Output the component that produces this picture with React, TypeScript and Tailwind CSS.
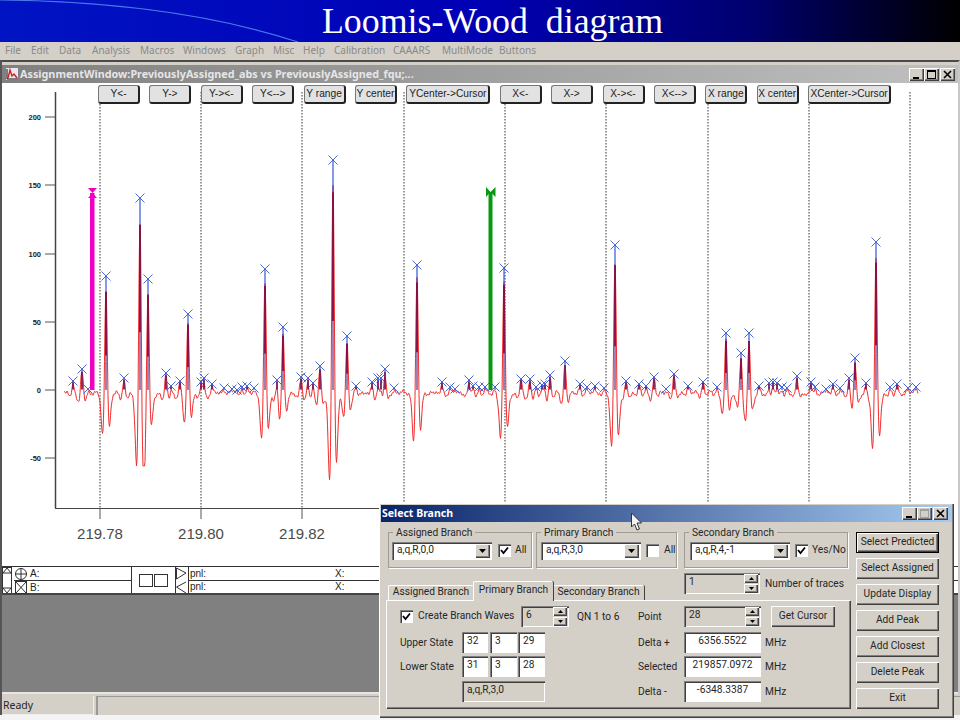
import React from "react";

const raised = "shadow-[inset_1px_1px_0_#ffffff,inset_-1px_-1px_0_#404040,inset_-2px_-2px_0_#808080]";
const sunken = "shadow-[inset_1px_1px_0_#808080,inset_2px_2px_0_#404040,inset_-1px_-1px_0_#ffffff]";

const peaks: [number, number][] = [
  [73,381],[82,369],[88,389],[106,276],[124,378],[140,198],[148,279],[166,373],[171,386],[180,381],[188,314],[201,382],[204,378],[212,384],[224,388],[232,389],[237,390],[242,387],[247,386],[254,388],[265,269],[277,380],[283,327],[301,377],[308,378],[313,383],[320,366],[333,160],[347,336],[356,386],[372,382],[378,378],[381,378],[385,369],[394,388],[417,265],[442,382],[450,387],[455,389],[469,380],[473,386],[479,387],[485,387],[495,387],[504,268],[521,379],[530,379],[536,387],[542,385],[545,384],[550,375],[565,361],[580,384],[587,387],[595,386],[604,388],[615,245],[626,381],[639,384],[646,386],[654,377],[666,389],[674,374],[688,386],[703,382],[717,387],[726,333],[741,353],[749,333],[759,386],[769,383],[773,382],[777,383],[782,387],[787,388],[797,376],[811,382],[815,387],[826,389],[833,384],[840,388],[849,378],[855,358],[866,383],[876,242],[890,387],[897,384],[908,388],[916,387],
];

const BASE = 390;

function tracePath(): string {
  let d = "";
  for (let x = 64; x <= 918; x += 0.5) {
    let v = 0;
    for (const [px, py] of peaks) {
      const h = BASE - py;
      const t = (x - px) / 2;
      const a = h * 0.92 + 1;
      const g = (1 - t * t) * Math.exp(-(t * t) / 2);
      v += a * (g > 0 ? g : g * (t < 0 ? 0.85 : 0.66));
      const u = (x - px) / 7;
      v -= h * 0.03 * Math.exp(-(u * u) / 2);
    }
    const noise = Math.sin(x * 0.9) * 1.2 + Math.sin(x * 2.3 + 1) * 1 + Math.sin(x * 0.37) * 0.9;
    let y = BASE + 2 - v + noise;
    if (x < 200) y = Math.min(y, 466);
    d += (d ? "L" : "M") + x.toFixed(1) + " " + y.toFixed(1);
  }
  return d;
}

function Chart() {
  const gridX = [100, 201, 302, 404, 505, 606, 708, 809, 910];
  const yTicks: [number, string][] = [[117, "200"], [185, "150"], [254, "100"], [322, "50"], [390, "0"], [458, "-50"]];
  const xLabels: [number, string][] = [[100, "219.78"], [201, "219.80"], [302, "219.82"]];
  const OY = 83;
  return (
    <svg width="956" height="483" viewBox={`2 ${OY} 956 483`} className="block bg-white">
      <line x1="55.500" y1="92" x2="55.500" y2="508" stroke="#444" strokeWidth="1.500" />
      <line x1="55" y1="508.500" x2="915" y2="508.500" stroke="#444" strokeWidth="1.200" />
      {yTicks.map(([y, l]) => (
        <g key={l}>
          <line x1="45" y1={y} x2="55" y2={y} stroke="#555" />
          <text x="41" y={y + 3} textAnchor="end" fontSize="7.500" fontWeight="bold" fontFamily="Liberation Sans" fill="#222">{l}</text>
        </g>
      ))}
      {gridX.map((x) => (
        <g key={x}>
          <line x1={x} y1="92" x2={x} y2="508" stroke="#333" strokeWidth="1" strokeDasharray="1.500 1.500" />
          <line x1={x} y1="508" x2={x} y2="519" stroke="#555" />
        </g>
      ))}
      {xLabels.map(([x, l]) => (
        <text key={l} x={x} y="539" textAnchor="middle" fontSize="15" fontFamily="Liberation Sans" fill="#4a4a4a">{l}</text>
      ))}
      <path d={tracePath()} fill="none" stroke="#f02c2c" strokeWidth="1" />
      {peaks.map(([x, y], i) => {
        const h = BASE - y;
        const big = h > 30;
        return (
          <g key={i}>
            <line x1={x} y1={BASE} x2={x} y2={y} stroke="#3558d6" strokeWidth="1.200" />
            {h > 3 && (
              <line x1={x} y1={BASE - h * 0.86} x2={x} y2={big ? BASE - h * 0.3 : BASE - 1} stroke="#8a0b3c" strokeWidth={big ? 1.800 : 1.500} />
            )}
            {big && <line x1={x} y1={BASE} x2={x} y2={BASE - h * 0.3} stroke="#a878a0" strokeWidth="1.400" />}
            <path d={`M${x - 4.5} ${y - 4.5}L${x + 4.5} ${y + 4.5}M${x + 4.5} ${y - 4.5}L${x - 4.5} ${y + 4.5}`} stroke="#3558d6" strokeWidth="0.900" fill="none" />
          </g>
        );
      })}
      <rect x="90" y="193" width="4.500" height="197" fill="#f000c0" />
      <path d="M88 188H97L92.500 193L97 198H88L92.500 193Z" fill="#f000c0" />
      <rect x="488.500" y="192" width="4" height="198" fill="#069a10" />
      <path d="M486 187L490.500 192L495.500 187V197L490.500 192L486 197Z" fill="#069a10" />
    </svg>
  );
}

function ChartBtn({ label, w = "w-[42px]" }: { label: string; w?: string }) {
  return (
    <div className={`${w} h-[19px] shrink-0 flex items-center justify-center rounded-[3px] bg-[#e2e2e2] border border-[#777] border-r-[#222] border-b-[#222] border-r-2 border-b-2 text-[10.200px] leading-none text-[#222] whitespace-nowrap overflow-hidden font-['Liberation_Sans',sans-serif]`}>
      {label}
    </div>
  );
}

function WinBtns({ disabledMax = false }: { disabledMax?: boolean }) {
  const cls = `w-[15px] h-[13px] bg-[#d4d0c8] flex items-center justify-center ${raised}`;
  return (
    <div className="flex">
      <div className={cls}><svg width="9" height="9"><rect x="1" y="7" width="6" height="2" fill="#000" /></svg></div>
      <div className={cls}><svg width="9" height="9"><rect x="0.500" y="1.500" width="8" height="7" fill="none" stroke={disabledMax ? "#a0a0a0" : "#000"} /><rect x="0" y="0" width="9" height="2" fill={disabledMax ? "#a0a0a0" : "#000"} /></svg></div>
      <div className={`${cls} ml-[1px]`}><svg width="9" height="9"><path d="M1 1L8 8M8 1L1 8" stroke="#000" strokeWidth="1.600" /></svg></div>
    </div>
  );
}

function GroupBox({ title, className, children }: { title: string; className: string; children: React.ReactNode }) {
  return (
    <div className={`relative h-[36px] border border-[#a09c94] shadow-[1px_1px_0_#ffffff] flex items-center pt-[1px] ${className}`}>
      <span className="absolute left-[4px] -top-[7px] bg-[#d4d0c8] px-[3px] leading-[13px]">{title}</span>
      {children}
    </div>
  );
}

function Combo({ value, w }: { value: string; w: string }) {
  return (
    <div className={`${w} h-[18px] bg-white ${sunken} flex items-center pl-[5px] pr-[2px] shrink-0`}>
      <span className="flex-1">{value}</span>
      <div className={`w-[15px] h-[14px] bg-[#d4d0c8] ${raised} flex items-center justify-center`}>
        <svg width="7" height="4"><path d="M0 0H7L3.500 4Z" fill="#000" /></svg>
      </div>
    </div>
  );
}

function Check({ on, className = "" }: { on: boolean; className?: string }) {
  return (
    <div className={`w-[13px] h-[13px] bg-white shrink-0 ${sunken} flex items-center justify-center ${className}`}>
      {on && <svg width="9" height="9"><path d="M1 4L3.500 7L8 1.500" stroke="#000" strokeWidth="1.800" fill="none" /></svg>}
    </div>
  );
}

function Spin({ value, w }: { value: string; w: string }) {
  const b = `w-[14px] h-[9px] bg-[#d4d0c8] ${raised} flex items-center justify-center`;
  return (
    <div className={`${w} h-[21px] ${sunken} bg-[#d4d0c8] flex items-center pl-[5px] pr-[2px] shrink-0`}>
      <span className="flex-1 -mt-[2px]">{value}</span>
      <div className="flex flex-col gap-[1px]">
        <div className={b}><svg width="5" height="3"><path d="M0 3H5L2.500 0Z" fill="#000" /></svg></div>
        <div className={b}><svg width="5" height="3"><path d="M0 0H5L2.500 3Z" fill="#000" /></svg></div>
      </div>
    </div>
  );
}

function Field({ value, w, center = false, gray = false }: { value: string; w: string; center?: boolean; gray?: boolean }) {
  return (
    <div className={`${w} h-[21px] ${sunken} ${gray ? "bg-[#d4d0c8]" : "bg-white"} flex items-center shrink-0 pb-[3px] ${center ? "justify-center" : "pl-[5px]"}`}>
      {value}
    </div>
  );
}

function DlgBtn({ label, def = false, w = "w-[83px]" }: { label: string; def?: boolean; w?: string }) {
  return (
    <div className={`${w} h-[21px] bg-[#d4d0c8] flex items-center justify-center whitespace-nowrap ${def ? "border border-black " : ""}${raised}`}>
      {label}
    </div>
  );
}

function Dialog() {
  return (
    <div className={`absolute left-[379px] top-[503px] w-[575px] h-[215px] bg-[#d4d0c8] ${raised} p-[2px] font-['Roboto',sans-serif] text-[10.200px] leading-none text-[#262626]`}>
      <div className="h-[17px] bg-[linear-gradient(90deg,#0a246a,#a6caf0)] flex items-center justify-between pl-[1px] pr-[4px]">
        <span className="text-white font-bold text-[10.500px] font-['Noto_Sans',sans-serif]">Select Branch</span>
        <WinBtns disabledMax />
      </div>
      <div className="flex pl-[5px] pt-[10px]">
        <div className="w-[464px] flex flex-col">
          <div className="flex ml-[2px]">
            <GroupBox title="Assigned Branch" className="w-[144px] pl-[3px]">
              <Combo value="a,q,R,0,0" w="w-[100px]" />
              <Check on className="ml-[6px]" />
              <span className="ml-[4px]">All</span>
            </GroupBox>
            <GroupBox title="Primary Branch" className="w-[141px] ml-[4px] pl-[4px]">
              <Combo value="a,q,R,3,0" w="w-[100px]" />
              <Check on={false} className="ml-[5px]" />
              <span className="ml-[5px]">All</span>
            </GroupBox>
            <GroupBox title="Secondary Branch" className="w-[164px] ml-[7px] pl-[5px]">
              <Combo value="a,q,R,4,-1" w="w-[100px]" />
              <Check on className="ml-[5px]" />
              <span className="ml-[4px]">Yes/No</span>
            </GroupBox>
          </div>
          <div className="flex h-[27px] mt-[5px] ml-[2px]">
            <div className="flex items-end w-[256px]">
              <div className="w-[85px] h-[15px] flex items-center justify-center border-t border-l border-white rounded-t-[2px] pb-[2px]">Assigned Branch</div>
              <div className="w-[80px] h-[20px] flex items-center justify-center border-t border-l border-white shadow-[1px_0_0_#404040] rounded-t-[2px] pb-[3px] relative z-10 bg-[#d4d0c8] -mb-[1px]">Primary Branch</div>
              <div className="w-[91px] h-[15px] flex items-center justify-center border-t border-white shadow-[1px_0_0_#404040] rounded-t-[2px] pb-[2px]">Secondary Branch</div>
            </div>
            <div className="ml-[40px] flex items-start">
              <Spin value="1" w="w-[76px]" />
              <span className="ml-[5px] mt-[6px] whitespace-nowrap">Number of traces</span>
            </div>
          </div>
          <div className="h-[108px] border-t border-l border-white shadow-[inset_-1px_-1px_0_#808080,1px_1px_0_#404040] pl-[13px] pt-[5px] flex flex-col">
            <div className="flex items-center h-[21px]">
              <div className="w-[238px] flex items-center">
                <Check on />
                <span className="ml-[5px] w-[103px] whitespace-nowrap">Create Branch Waves</span>
                <Spin value="6" w="w-[48px]" />
                <span className="ml-[8px] whitespace-nowrap pt-[1px]">QN 1 to 6</span>
              </div>
              <span className="w-[46px] pt-[1px]">Point</span>
              <Spin value="28" w="w-[77px]" />
              <div className="ml-[10px]"><DlgBtn label="Get Cursor" w="w-[64px]" /></div>
            </div>
            <div className="flex items-center h-[21px] mt-[5px]">
              <div className="w-[238px] flex items-center">
                <span className="w-[62px] pt-[2px]">Upper State</span>
                <Field value="32" w="w-[26px]" />
                <Field value="3" w="w-[27px] ml-[2px]" />
                <Field value="29" w="w-[27px] ml-[1px]" />
              </div>
              <span className="w-[46px] pt-[2px]">Delta +</span>
              <Field value="6356.5522" w="w-[77px]" center />
              <span className="ml-[4px] pt-[2px]">MHz</span>
            </div>
            <div className="flex items-center h-[21px] mt-[3px]">
              <div className="w-[238px] flex items-center">
                <span className="w-[62px] pt-[2px]">Lower State</span>
                <Field value="31" w="w-[26px]" />
                <Field value="3" w="w-[27px] ml-[2px]" />
                <Field value="28" w="w-[27px] ml-[1px]" />
              </div>
              <span className="w-[46px] pt-[2px]">Selected</span>
              <Field value="219857.0972" w="w-[77px]" center />
              <span className="ml-[4px] pt-[2px]">MHz</span>
            </div>
            <div className="flex items-center h-[21px] mt-[4px]">
              <div className="w-[238px] flex items-center">
                <span className="w-[62px]" />
                <Field value="a,q,R,3,0" w="w-[83px]" gray />
              </div>
              <span className="w-[46px] pt-[2px]">Delta -</span>
              <Field value="-6348.3387" w="w-[77px]" center />
              <span className="ml-[4px] pt-[2px]">MHz</span>
            </div>
          </div>
        </div>
        <div className="ml-[6px] flex flex-col gap-[5px]">
          <DlgBtn label="Select Predicted" def />
          {["Select Assigned", "Update Display", "Add Peak", "Add Closest", "Delete Peak", "Exit"].map((l) => (
            <DlgBtn key={l} label={l} />
          ))}
        </div>
      </div>
    </div>
  );
}

function Strip() {
  return (
    <div className="h-[29px] bg-white border-t border-[#333] border-b-2 border-b-[#444] flex text-[10px] leading-none text-[#222] font-['Liberation_Sans',sans-serif]">
      <svg width="12" height="26" className="shrink-0">
        <rect x="0.500" y="0.500" width="9" height="26" fill="#fff" stroke="#333" />
        <path d="M1 6L5 1L9 6Z" fill="none" stroke="#333" />
        <path d="M1 21L5 26L9 21Z" fill="none" stroke="#333" />
      </svg>
      <div className="w-[118px] flex flex-col border-r border-[#333] shrink-0">
        <div className="h-[14px] flex items-center border-b border-[#333]">
          <svg width="14" height="14"><circle cx="7" cy="7" r="5.500" fill="none" stroke="#333" /><path d="M1 7H13M7 1V13" stroke="#333" /></svg>
          <span className="ml-[2px]">A:</span>
        </div>
        <div className="flex-1 flex items-center">
          <svg width="14" height="13"><rect x="1.500" y="0.500" width="11" height="12" fill="none" stroke="#333" /><path d="M2 1L12 12M12 1L2 12" stroke="#333" /></svg>
          <span className="ml-[2px]">B:</span>
        </div>
      </div>
      <div className="w-[44px] flex items-center justify-center shrink-0 border-r border-[#333]">
        <svg width="30" height="13"><rect x="0.500" y="0.500" width="13" height="12" fill="none" stroke="#333" /><rect x="15.500" y="0.500" width="13" height="12" fill="none" stroke="#333" /></svg>
      </div>
      <svg width="11" height="26" className="shrink-0">
        <path d="M0.500 1L10 6L0.500 12Z" fill="none" stroke="#333" />
        <path d="M10 15L0.500 20L10 26" fill="none" stroke="#333" />
      </svg>
      <div className="flex-1 flex flex-col border-l border-[#333] ml-[1px]">
        <div className="h-[14px] flex items-center border-b border-[#333] pl-[1px]"><span className="w-[145px]">pnl:</span><span>X:</span></div>
        <div className="flex-1 flex items-center pl-[1px]"><span className="w-[145px]">pnl:</span><span>X:</span></div>
      </div>
    </div>
  );
}

export default function App() {
  const menus = [
    ["File", "w-[26px]"], ["Edit", "w-[28px]"], ["Data", "w-[33px]"], ["Analysis", "w-[48px]"], ["Macros", "w-[43px]"], ["Windows", "w-[52px]"], ["Graph", "w-[38px]"], ["Misc", "w-[30px]"], ["Help", "w-[31px]"], ["Calibration", "w-[59px]"], ["CAAARS", "w-[49px]"], ["MultiMode", "w-[57px]"], ["Buttons", "w-[50px]"],
  ];
  return (
    <div className="relative w-[960px] h-[720px] overflow-hidden bg-white flex flex-col">
      <div className="relative h-[42px] shrink-0 bg-[linear-gradient(90deg,#0014c4_0%,#0000b4_50%,#000070_78%,#000000_100%)] overflow-hidden">
        <svg width="320" height="42" className="absolute left-0 top-0"><path d="M0 0C90 1 200 10 298 42" fill="none" stroke="#4a78ea" strokeWidth="1.200" /></svg>
        <div className="pl-[322px] text-white text-[35.800px] leading-[42px] whitespace-pre font-['Liberation_Serif',serif]">Loomis-Wood  diagram</div>
      </div>
      <div className="h-[18px] shrink-0 bg-[#d4d0c8] flex items-center pl-[5px] pb-[1px] text-[10px] text-[#8a8a8a] font-['Noto_Sans',sans-serif]">
        {menus.map(([m, w]) => <span key={m} className={w}>{m}</span>)}
      </div>
      <div className="flex-1 flex flex-col min-h-0 border-t-2 border-[#4a4a4a] border-l-2 border-l-[#555] border-r-2 border-r-[#c8c8c8]">
        <div className="h-[3px] bg-[#d4d0c8] shrink-0" />
        <div className="h-[18px] shrink-0 bg-[linear-gradient(90deg,#808080,#c0c0c0)] flex items-center justify-between pl-[3px] pr-[3px]">
          <div className="flex items-center">
            <svg width="14" height="14" className="shrink-0"><rect x="1" y="1" width="12" height="12" fill="#e8e8f0" /><path d="M2 2V12H13" stroke="#111" fill="none" /><path d="M3 11L5 3L7 9L9 7L12 11" stroke="#d02020" strokeWidth="1.400" fill="none" /></svg>
            <span className="ml-[1px] text-[#e6e6e6] font-bold text-[10.800px] font-['Noto_Sans',sans-serif] whitespace-nowrap">AssignmentWindow:PreviouslyAssigned_abs vs PreviouslyAssigned_fqu;...</span>
          </div>
          <WinBtns />
        </div>
        <div className="relative shrink-0">
          <Chart />
          <div className="absolute left-[96px] top-[2px] flex gap-[9.400px]">
            {["Y<-", "Y->", "Y-><-", "Y<-->", "Y range", "Y center"].map((l) => <ChartBtn key={l} label={l} />)}
            <ChartBtn label="YCenter->Cursor" w="w-[84px]" />
            {["X<-", "X->", "X-><-", "X<-->", "X range", "X center"].map((l) => <ChartBtn key={l} label={l} />)}
            <ChartBtn label="XCenter->Cursor" w="w-[83px]" />
          </div>
        </div>
        <Strip />
        <div className="flex-1 bg-[#808080] min-h-0" />
        <div className="h-[2px] bg-[#e8e6e0] shrink-0" />
      </div>
      <div className="h-[21px] shrink-0 bg-[#d4d0c8] flex pt-[2px] text-[10.500px] text-[#262626] font-['Noto_Sans',sans-serif] border-l-2 border-[#555]">
        <div className="w-[92px] flex items-center pl-[1px] shadow-[inset_-1px_-1px_0_#eee]">Ready</div>
        <div className="flex-1 ml-[2px] border-l-2 border-t border-[#999]" />
      </div>
      <div className="h-[5px] shrink-0 bg-[#f4f4f4]" />
      <Dialog />
      <svg width="14" height="20" className="absolute left-[630px] top-[512px]">
        <path d="M1.500 1V15L4.500 12L7 18L9.500 17L7 11H11.500Z" fill="#f4f4f4" stroke="#333" strokeWidth="1" />
      </svg>
    </div>
  );
}
